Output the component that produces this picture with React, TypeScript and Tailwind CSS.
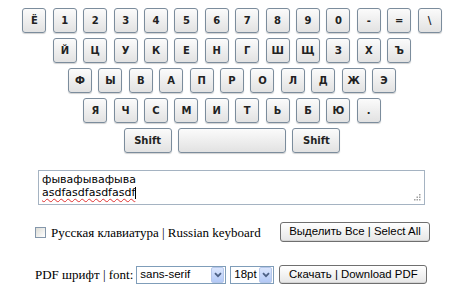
import React from 'react';

const rows: string[][] = [
  ['Ё', '1', '2', '3', '4', '5', '6', '7', '8', '9', '0', '-', '=', '\\'],
  ['Й', 'Ц', 'У', 'К', 'Е', 'Н', 'Г', 'Ш', 'Щ', 'З', 'Х', 'Ъ'],
  ['Ф', 'Ы', 'В', 'А', 'П', 'Р', 'О', 'Л', 'Д', 'Ж', 'Э'],
  ['Я', 'Ч', 'С', 'М', 'И', 'Т', 'Ь', 'Б', 'Ю', '.'],
];

// одна клавиша экранной клавиатуры
const Key = ({ label, className = 'w-[24px]' }: { label: string; className?: string }) => (
  <div
    className={`${className} h-[25px] flex items-center justify-center rounded-[3px] border border-[#7b8c9c] bg-linear-to-b from-[#fbfbfb] to-[#e2e2e2] shadow-[0_1px_1px_rgba(0,0,0,0.18)] text-[10px] font-bold text-[#222] font-['DejaVu_Sans',sans-serif]`}
  >
    {label}
  </div>
);

// выпадающий список в стиле XP
const FakeSelect = ({ value, className }: { value: string; className: string }) => (
  <div className={`${className} h-[18px] flex items-center border border-[#7f9db9] bg-white`}>
    <span className="flex-1 pl-[3px] text-[11.5px] text-black font-['Liberation_Sans',sans-serif] leading-none">{value}</span>
    <span className="w-[13px] h-[16px] mr-[1px] flex items-center justify-center rounded-[2px] border border-[#b6c7ea] bg-linear-to-b from-[#dbe6fd] to-[#b3c9f6]">
      <svg width="8" height="6" viewBox="0 0 8 6">
        <path d="M1 1.2 L4 4.2 L7 1.2" fill="none" stroke="#4d6185" strokeWidth="1.8" />
      </svg>
    </span>
  </div>
);

const XpButton = ({ children, className }: { children: React.ReactNode; className: string }) => (
  <div
    className={`${className} flex items-center justify-center rounded-[3px] border border-[#6f6f6f] bg-linear-to-b from-[#ffffff] to-[#e6e6e6] shadow-[inset_0_-1px_0_rgba(0,0,0,0.08)] text-[11.4px] text-black font-['Liberation_Sans',sans-serif] leading-none`}
  >
    {children}
  </div>
);

export default function App() {
  return (
    <div className="w-[450px] h-[292px] bg-white overflow-hidden">
      {/* клавиатура */}
      <div className="w-[450px] pl-[14px] pt-[8px] flex flex-col items-center gap-[5px]">
        {rows.map((row, i) => (
          <div key={i} className="flex gap-[6.4px]">
            {row.map((k) => (
              <Key key={k} label={k} />
            ))}
          </div>
        ))}
        <div className="flex gap-[6.4px]">
          <Key label="Shift" className="w-[48px]" />
          <Key label="" className="w-[108px]" />
          <Key label="Shift" className="w-[48px]" />
        </div>
      </div>

      {/* поле ввода */}
      <div className="relative ml-[38px] mt-[17px] w-[387px] h-[35px] border border-[#a5b3c2] bg-white px-[3px] pt-[3px] text-[11px] leading-[12.5px] text-black font-['DejaVu_Sans',sans-serif]">
        <div>фывафывафыва</div>
        <div className="flex items-center">
          <span className="underline decoration-wavy decoration-[#e03030] decoration-1 underline-offset-[2px]">asdfasdfasdfasdf</span>
          <span className="w-px h-[12px] bg-black" />
        </div>
        <svg className="absolute right-[3px] bottom-[3px]" width="7" height="7" viewBox="0 0 7 7">
          <g fill="#a0a0a0">
            <rect x="5" y="0" width="1.5" height="1.5" />
            <rect x="2.5" y="2.5" width="1.5" height="1.5" />
            <rect x="5" y="2.5" width="1.5" height="1.5" />
            <rect x="0" y="5" width="1.5" height="1.5" />
            <rect x="2.5" y="5" width="1.5" height="1.5" />
            <rect x="5" y="5" width="1.5" height="1.5" />
          </g>
        </svg>
      </div>

      {/* переключатель и кнопка выделения */}
      <div className="mt-[17px] pl-[35px] flex items-center h-[20px]">
        <span className="w-[11px] h-[11px] border border-[#8497ab] bg-linear-to-br from-[#dcdcd6] to-[#ffffff]" />
        <span className="ml-[5px] text-[13px] text-black font-['Liberation_Serif',serif] leading-none">
          Русская клавиатура | Russian keyboard
        </span>
        <XpButton className="ml-auto mr-[20px] w-[150px] h-[20px]">Выделить Все | Select All</XpButton>
      </div>

      {/* настройки PDF */}
      <div className="mt-[23px] pl-[35px] flex items-center h-[19px]">
        <span className="text-[13px] text-black font-['Liberation_Serif',serif] leading-none">PDF шрифт | font:</span>
        <FakeSelect value="sans-serif" className="ml-[3px] w-[90px]" />
        <FakeSelect value="18pt" className="ml-[4px] w-[44px]" />
        <XpButton className="ml-[5px] w-[148px] h-[19px]">Скачать | Download PDF</XpButton>
      </div>
    </div>
  );
}
